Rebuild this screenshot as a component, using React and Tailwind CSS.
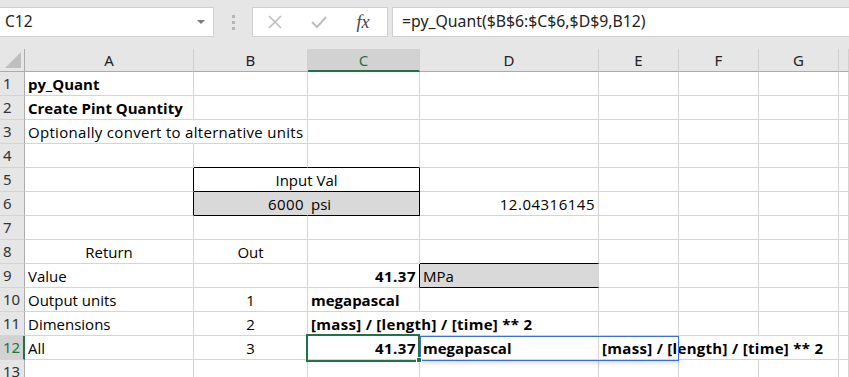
import React from "react";

const CELL_FONT = { fontFamily: "'Open Sans', 'Liberation Sans', sans-serif" };
const UI_FONT = { fontFamily: "'Noto Sans', 'Open Sans', sans-serif" };

const COLS = ["A", "B", "C", "D", "E", "F", "G", ""];

function Cell({ children, className = "" }) {
  return (
    <div
      className={`h-6 border-r border-b border-[#d4d4d4] px-[3px] text-[15px] leading-[24px] whitespace-nowrap overflow-hidden text-black ${className}`}
    >
      {children}
    </div>
  );
}

function RowHead({ n, active }) {
  return (
    <div
      style={UI_FONT}
      className={`h-6 pl-[3px] text-[15px] leading-[23px] border-b border-[#d4d4d4] ${
        active
          ? "bg-[#d2d2d2] text-[#217346] border-r-2 border-r-[#217346]"
          : "bg-[#e6e6e6] text-[#333] border-r border-r-[#ababab]"
      }`}
    >
      {n}
    </div>
  );
}

function Empty({ className = "" }) {
  return <Cell className={className} />;
}

export default function App() {
  return (
    <div className="relative w-[849px] h-[377px] overflow-hidden bg-white">
      {/* Formula bar */}
      <div className="h-[49px] bg-[#e6e6e6] flex items-start pt-[7px]">
        <div className="w-[214px] h-[30px] bg-white border border-l-0 border-[#d0d0d0] flex items-center justify-between pl-[5px] pr-[8px]">
          <span style={UI_FONT} className="text-[15.5px] text-[#222]">
            C12
          </span>
          <svg width="8" height="5" viewBox="0 0 8 5">
            <path d="M0 0h8L4 4z" fill="#7a7a7a" />
          </svg>
        </div>
        <div className="w-[38px] h-[30px] flex flex-col items-center justify-center gap-[3px]">
          <div className="w-[3px] h-[3px] bg-[#b5b5b5]" />
          <div className="w-[3px] h-[3px] bg-[#b5b5b5]" />
          <div className="w-[3px] h-[3px] bg-[#b5b5b5]" />
        </div>
        <div className="w-[136px] h-[30px] bg-white border border-[#d0d0d0] flex items-center">
          <div className="w-[44px] flex justify-center">
            <svg width="14" height="14" viewBox="0 0 14 14">
              <path d="M1 1l12 12M13 1L1 13" stroke="#bdbdbd" strokeWidth="1.6" />
            </svg>
          </div>
          <div className="w-[44px] flex justify-center">
            <svg width="16" height="14" viewBox="0 0 16 14">
              <path d="M1 7l5 5L15 2" stroke="#bdbdbd" strokeWidth="2" fill="none" />
            </svg>
          </div>
          <div className="w-[44px] flex justify-center">
            <span
              style={{ fontFamily: "'Liberation Serif', serif" }}
              className="italic text-[18px] text-[#444] leading-none"
            >
              fx
            </span>
          </div>
        </div>
        <div className="w-[4px]" />
        <div className="flex-1 h-[30px] bg-white border border-r-0 border-[#d0d0d0] flex items-center pl-[9px]">
          <span style={UI_FONT} className="text-[15.8px] text-[#222]">
            =py_Quant($B$6:$C$6,$D$9,B12)
          </span>
        </div>
      </div>

      {/* Sheet grid */}
      <div
        style={CELL_FONT}
        className="grid grid-cols-[25px_169px_114px_112px_179px_80px_80px_80px_10px]"
      >
        {/* Column headers */}
        <div className="h-[23px] bg-[#e6e6e6] border-r border-b border-[#ababab] relative flex items-end justify-end pr-[3px] pb-[3px]">
          <svg width="16" height="16" viewBox="0 0 16 16">
            <path d="M16 0V16H0z" fill="#bfbfbf" />
          </svg>
        </div>
        {COLS.map((c, i) => (
          <div
            key={i}
            style={UI_FONT}
            className={`h-[23px] text-center text-[15px] leading-[22px] border-r border-[#d0d0d0] ${
              c === "C"
                ? "bg-[#d2d2d2] text-[#217346] border-b-2 border-b-[#217346]"
                : "bg-[#e6e6e6] text-[#222] border-b border-b-[#ababab]"
            }`}
          >
            {c}
          </div>
        ))}

        {/* Row 1 */}
        <RowHead n={1} />
        <Cell className="font-bold">py_Quant</Cell>
        <Empty />
        <Empty />
        <Empty />
        <Empty />
        <Empty />
        <Empty />
        <Empty />

        {/* Row 2 */}
        <RowHead n={2} />
        <Cell className="font-bold">Create Pint Quantity</Cell>
        <Empty />
        <Empty />
        <Empty />
        <Empty />
        <Empty />
        <Empty />
        <Empty />

        {/* Row 3 */}
        <RowHead n={3} />
        <Cell className="col-span-2 tracking-[0.3px] pr-0">Optionally convert to alternative units</Cell>
        <Empty />
        <Empty />
        <Empty />
        <Empty />
        <Empty />
        <Empty />

        {/* Row 4 */}
        <RowHead n={4} />
        <Empty />
        <Empty className="border-b-black" />
        <Empty className="border-b-black" />
        <Empty />
        <Empty />
        <Empty />
        <Empty />
        <Empty />

        {/* Row 5 */}
        <RowHead n={5} />
        <Empty className="border-r-black" />
        <Cell className="col-span-2 text-center border-r-black border-b-black">Input Val</Cell>
        <Empty />
        <Empty />
        <Empty />
        <Empty />
        <Empty />

        {/* Row 6 */}
        <RowHead n={6} />
        <Empty className="border-r-black" />
        <Cell className="text-right tracking-[0.4px] bg-[#d9d9d9] border-r-[#d9d9d9] border-b-black">6000</Cell>
        <Cell className="bg-[#d9d9d9] border-r-black border-b-black">psi</Cell>
        <Cell className="text-right tracking-[0.5px]">12.04316145</Cell>
        <Empty />
        <Empty />
        <Empty />
        <Empty />

        {/* Row 7 */}
        <RowHead n={7} />
        <Empty />
        <Empty />
        <Empty />
        <Empty />
        <Empty />
        <Empty />
        <Empty />
        <Empty />

        {/* Row 8 */}
        <RowHead n={8} />
        <Cell className="text-center">Return</Cell>
        <Cell className="text-center">Out</Cell>
        <Empty />
        <Empty className="border-b-black" />
        <Empty />
        <Empty />
        <Empty />
        <Empty />

        {/* Row 9 */}
        <RowHead n={9} />
        <Cell>Value</Cell>
        <Empty />
        <Cell className="text-right font-bold tracking-[0.5px] border-r-black">41.37</Cell>
        <Cell className="bg-[#d9d9d9] border-b-black">MPa</Cell>
        <Empty />
        <Empty />
        <Empty />
        <Empty />

        {/* Row 10 */}
        <RowHead n={10} />
        <Cell>Output units</Cell>
        <Cell className="text-center">1</Cell>
        <Cell className="font-bold">megapascal</Cell>
        <Empty />
        <Empty />
        <Empty />
        <Empty />
        <Empty />

        {/* Row 11 */}
        <RowHead n={11} />
        <Cell>Dimensions</Cell>
        <Cell className="text-center">2</Cell>
        <Cell className="col-span-2 font-bold tracking-[0.3px]">[mass] / [length] / [time] ** 2</Cell>
        <Empty />
        <Empty />
        <Empty />
        <Empty />

        {/* Row 12 */}
        <RowHead n={12} active />
        <Cell>All</Cell>
        <Cell className="text-center">3</Cell>
        <Cell className="text-right font-bold tracking-[0.5px]">41.37</Cell>
        <Cell className="font-bold">megapascal</Cell>
        <Cell className="col-span-3 font-bold tracking-[0.3px]">[mass] / [length] / [time] ** 2</Cell>
        <Empty />

        {/* Row 13 */}
        <RowHead n={13} />
        <Empty />
        <Empty />
        <Empty />
        <Empty />
        <Empty />
        <Empty />
        <Empty />
        <Empty />
      </div>

      {/* Spill range outline D12:E12 */}
      <div className="absolute left-[420px] top-[336px] w-[259px] h-[25px] border border-[#3a6fd0] shadow-[0_2px_4px_rgba(0,0,0,0.15)] pointer-events-none" />
      {/* Active cell C12 */}
      <div className="absolute left-[306px] top-[334px] w-[114px] h-[28px] border-2 border-[#217346] pointer-events-none" />
      <div className="absolute left-[416px] top-[357px] w-[6px] h-[6px] bg-[#217346] border border-white pointer-events-none" />
    </div>
  );
}
